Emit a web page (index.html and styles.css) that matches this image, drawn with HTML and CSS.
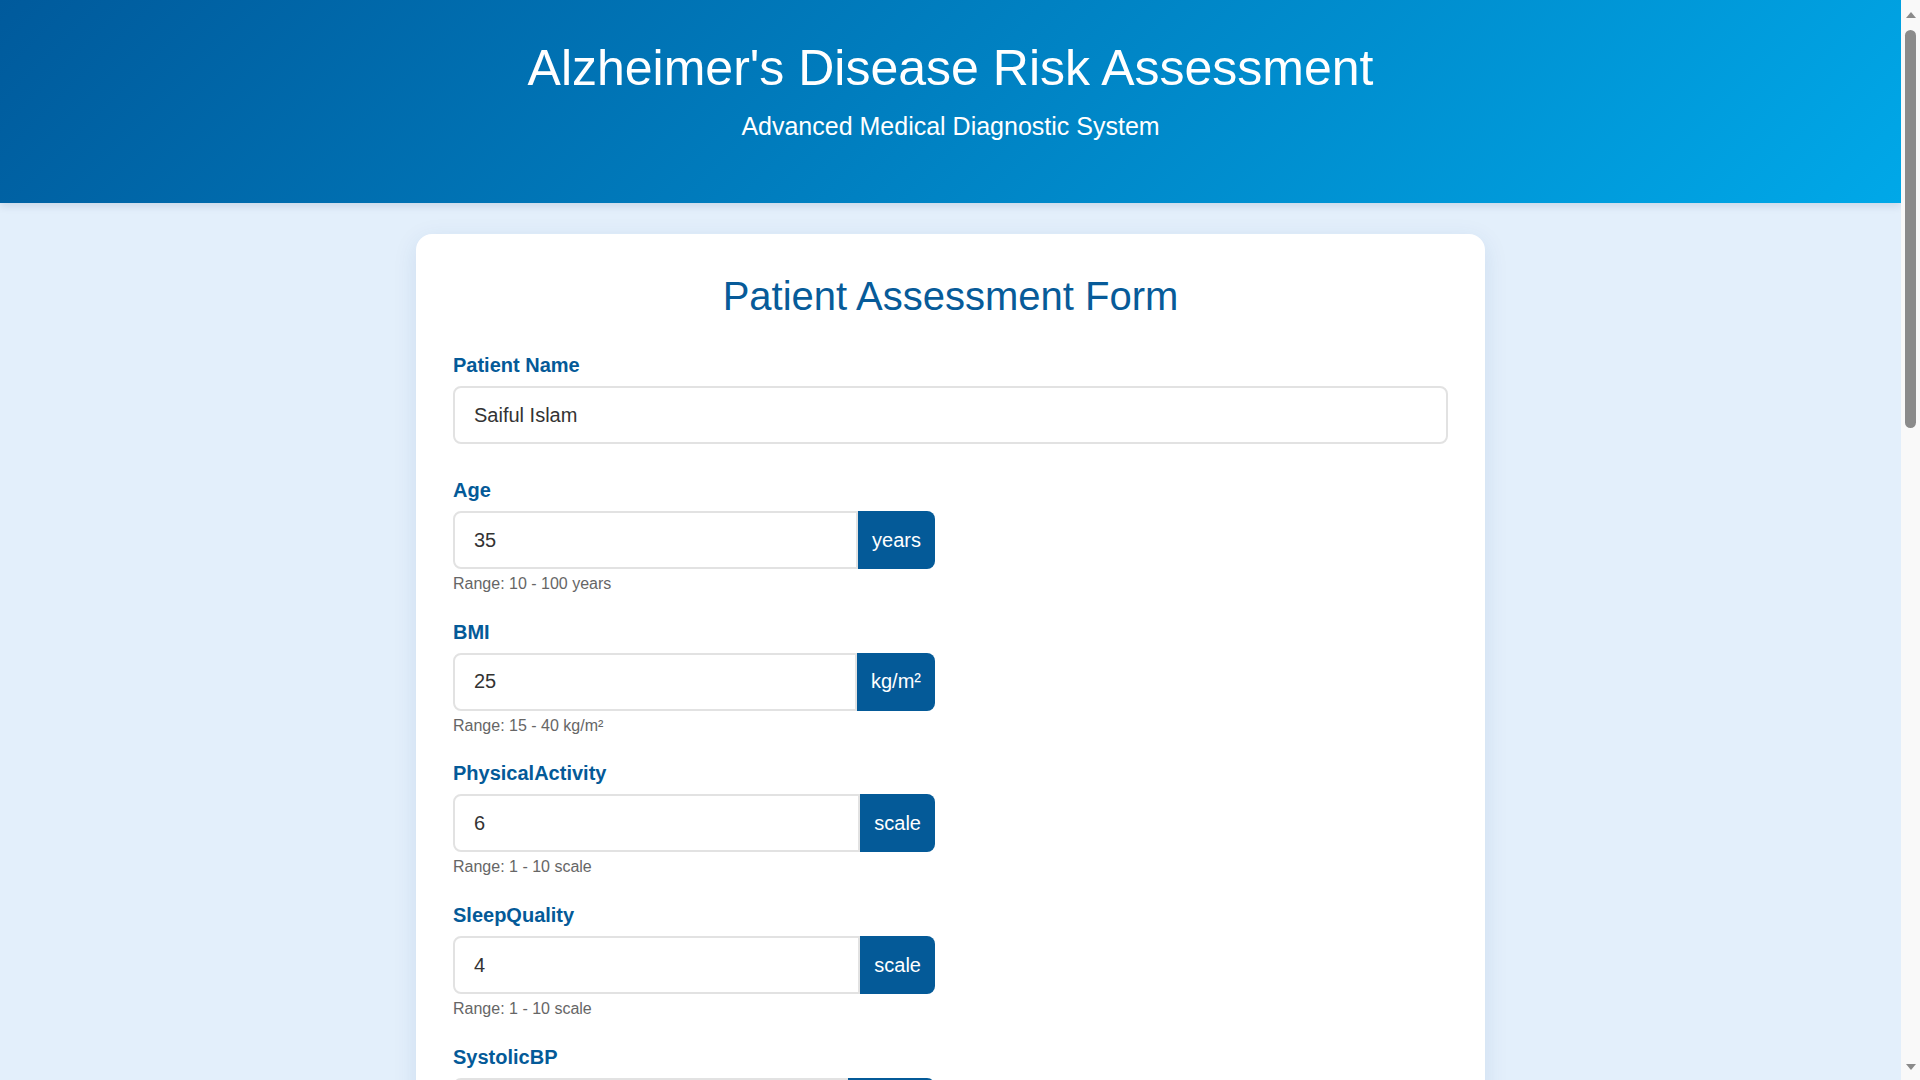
FILE: index.html
```html
<!DOCTYPE html>
<html lang="en">
<head>
<meta charset="UTF-8">
<title>Alzheimer's Disease Risk Assessment</title>
<link rel="stylesheet" href="styles.css">
</head>
<body>
<div class="page">
<header class="site-header">
  <h1 class="site-title">Alzheimer's Disease Risk Assessment</h1>
  <p class="site-subtitle">Advanced Medical Diagnostic System</p>
</header>
<main class="main">
  <form class="card">
    <h2 class="card-title">Patient Assessment Form</h2>

    <div class="field field-name">
      <label class="field-label" for="name">Patient Name</label>
      <input class="text-input" id="name" type="text" value="Saiful Islam">
    </div>

    <div class="field">
      <label class="field-label" for="age">Age</label>
      <div class="input-group">
        <input class="group-input" id="age" type="text" value="35">
        <span class="unit">years</span>
      </div>
      <div class="hint">Range: 10 - 100 years</div>
    </div>

    <div class="field">
      <label class="field-label" for="bmi">BMI</label>
      <div class="input-group">
        <input class="group-input" id="bmi" type="text" value="25">
        <span class="unit">kg/m²</span>
      </div>
      <div class="hint">Range: 15 - 40 kg/m²</div>
    </div>

    <div class="field">
      <label class="field-label" for="pa">PhysicalActivity</label>
      <div class="input-group">
        <input class="group-input" id="pa" type="text" value="6">
        <span class="unit">scale</span>
      </div>
      <div class="hint">Range: 1 - 10 scale</div>
    </div>

    <div class="field">
      <label class="field-label" for="sq">SleepQuality</label>
      <div class="input-group">
        <input class="group-input" id="sq" type="text" value="4">
        <span class="unit">scale</span>
      </div>
      <div class="hint">Range: 1 - 10 scale</div>
    </div>

    <div class="field">
      <label class="field-label" for="sbp">SystolicBP</label>
      <div class="input-group">
        <input class="group-input" id="sbp" type="text" value="120">
        <span class="unit">mmHg</span>
      </div>
      <div class="hint">Range: 90 - 180 mmHg</div>
    </div>

    <div class="field">
      <label class="field-label" for="dbp">DiastolicBP</label>
      <div class="input-group">
        <input class="group-input" id="dbp" type="text" value="80">
        <span class="unit">mmHg</span>
      </div>
      <div class="hint">Range: 60 - 120 mmHg</div>
    </div>

    <div class="field">
      <label class="field-label" for="ct">CholesterolTotal</label>
      <div class="input-group">
        <input class="group-input" id="ct" type="text" value="200">
        <span class="unit">mg/dL</span>
      </div>
      <div class="hint">Range: 150 - 300 mg/dL</div>
    </div>

    <div class="field">
      <label class="field-label" for="ldl">CholesterolLDL</label>
      <div class="input-group">
        <input class="group-input" id="ldl" type="text" value="100">
        <span class="unit">mg/dL</span>
      </div>
      <div class="hint">Range: 50 - 200 mg/dL</div>
    </div>

    <div class="field">
      <label class="field-label" for="hdl">CholesterolHDL</label>
      <div class="input-group">
        <input class="group-input" id="hdl" type="text" value="50">
        <span class="unit">mg/dL</span>
      </div>
      <div class="hint">Range: 20 - 100 mg/dL</div>
    </div>

    <div class="field">
      <label class="field-label" for="tg">CholesterolTriglycerides</label>
      <div class="input-group">
        <input class="group-input" id="tg" type="text" value="150">
        <span class="unit">mg/dL</span>
      </div>
      <div class="hint">Range: 50 - 400 mg/dL</div>
    </div>

    <div class="field">
      <label class="field-label" for="mmse">MMSE</label>
      <div class="input-group">
        <input class="group-input" id="mmse" type="text" value="25">
        <span class="unit">score</span>
      </div>
      <div class="hint">Range: 0 - 30 score</div>
    </div>

    <div class="field">
      <label class="field-label" for="fa">FunctionalAssessment</label>
      <div class="input-group">
        <input class="group-input" id="fa" type="text" value="7">
        <span class="unit">scale</span>
      </div>
      <div class="hint">Range: 0 - 10 scale</div>
    </div>

    <div class="field">
      <label class="field-label" for="adl">ADL</label>
      <div class="input-group">
        <input class="group-input" id="adl" type="text" value="8">
        <span class="unit">scale</span>
      </div>
      <div class="hint">Range: 0 - 10 scale</div>
    </div>

    <button class="submit" type="button">Assess Risk</button>
  </form>
</main>
</div>

<div class="scrollbar" aria-hidden="true">
  <div class="sb-button"><span class="sb-arrow-up"></span></div>
  <div class="sb-track"><div class="sb-thumb"></div></div>
  <div class="sb-button"><span class="sb-arrow-down"></span></div>
</div>
</body>
</html>
```

FILE: styles.css
```css
* {
  box-sizing: border-box;
}

html, body {
  margin: 0;
  padding: 0;
}

body {
  font-family: "Liberation Sans", Arial, sans-serif;
  background: #e3effb;
  color: #333;
}

.page {
  margin-right: 19px;
}

/* fake classic scrollbar overlaying the right edge */
.scrollbar {
  position: fixed;
  top: 0;
  right: 0;
  bottom: 0;
  width: 19px;
  background: #f9f9f9;
  display: flex;
  flex-direction: column;
}

.sb-button {
  height: 26px;
  display: flex;
  align-items: center;
  justify-content: center;
  flex: none;
}

.sb-arrow-up {
  width: 0;
  height: 0;
  border-left: 5.5px solid transparent;
  border-right: 5.5px solid transparent;
  border-bottom: 6px solid #8a8a8a;
  margin-top: 3px;
}

.sb-arrow-down {
  width: 0;
  height: 0;
  border-left: 5.5px solid transparent;
  border-right: 5.5px solid transparent;
  border-top: 6px solid #8a8a8a;
  margin-bottom: 1px;
}

.sb-track {
  flex: 1;
  display: flex;
  justify-content: center;
  padding-top: 4px;
}

.sb-thumb {
  width: 11px;
  height: 398px;
  background: #8b8b8b;
  border-radius: 6px;
}

.site-header {
  background: linear-gradient(135deg, #005a9c 0%, #00a8e8 100%);
  color: #fff;
  text-align: center;
  padding: 38px 20px 62px;
  box-shadow: 0 3px 8px rgba(0, 40, 90, 0.12);
}

.site-title {
  margin: 0;
  font-size: 50px;
  line-height: 60px;
  font-weight: normal;
}

.site-subtitle {
  margin: 13px 0 0;
  font-size: 25px;
  line-height: 30px;
}

.main {
  padding: 31px 0 40px;
}

.card {
  width: 1069px;
  margin: 0 auto;
  background: #fff;
  border-radius: 16px;
  padding: 38px 37px 50px;
  box-shadow: 0 6px 24px rgba(0, 70, 140, 0.1);
}

.card-title {
  margin: 0 0 33px;
  text-align: center;
  font-size: 40px;
  line-height: 48px;
  font-weight: normal;
  color: #075b99;
}

.field {
  margin-bottom: 26.7px;
}

.field-name {
  margin-bottom: 34px;
}

.field-label {
  display: block;
  font-size: 20px;
  line-height: 24px;
  font-weight: bold;
  color: #045a98;
  margin-bottom: 9px;
}

.text-input,
.group-input {
  font-family: "Liberation Sans", Arial, sans-serif;
  font-size: 20px;
  color: #333;
  height: 58px;
  border: 2px solid #e2e2e2;
  padding: 0 19px;
  background: #fff;
  outline: none;
}

.text-input {
  display: block;
  width: 100%;
  border-radius: 8px;
}

.input-group {
  display: flex;
  width: 482px;
}

.group-input {
  flex: 1;
  min-width: 0;
  border-radius: 8px 0 0 8px;
}

.unit {
  display: flex;
  align-items: center;
  padding: 0 14px;
  background: #045a98;
  color: #fff;
  font-size: 20px;
  border-radius: 0 8px 8px 0;
}

.hint {
  margin-top: 5px;
  font-size: 16px;
  line-height: 19px;
  color: #666;
}

.submit {
  display: block;
  width: 100%;
  margin-top: 20px;
  height: 60px;
  border: none;
  border-radius: 8px;
  background: linear-gradient(135deg, #005a9c 0%, #00a8e8 100%);
  color: #fff;
  font-family: "Liberation Sans", Arial, sans-serif;
  font-size: 22px;
}
```
